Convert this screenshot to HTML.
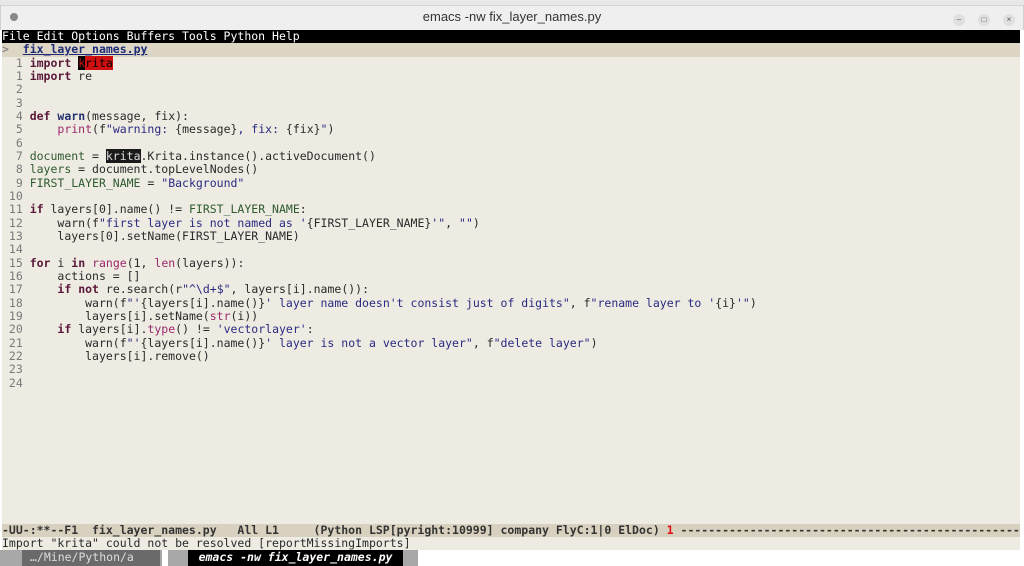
<!DOCTYPE html>
<html><head><meta charset="utf-8"><style>
*{margin:0;padding:0;box-sizing:border-box}
body{width:1024px;height:566px;overflow:hidden;background:#fff;font-family:"DejaVu Sans Mono","Liberation Mono",monospace;position:relative}
.sys{position:absolute;left:0;top:0;width:1024px;height:5px;background:#e8e8e8}
.title{position:absolute;left:0;top:5px;width:1024px;height:25px;background:#efefef;border-top:1px solid #d6d6d6;border-left:1px solid #d0d0d0;border-right:1px solid #d0d0d0;font-family:"Liberation Sans",sans-serif;font-size:13px;color:#333;text-align:center;line-height:22px}
.wb{position:absolute;top:8px;width:12px;height:12px;border-radius:50%;background:#e0e0e0;font-size:8px;line-height:12px;color:#555}
.term{position:absolute;left:2px;top:30px;width:1018px;height:520px;background:#eeebe3;overflow:hidden}
.row{position:absolute;left:0;width:1018px;height:13.33px;font-size:11.5px;line-height:13.33px;white-space:pre;color:#2a2a2a}
.menu{background:#000;color:#fff}
.hdr{background:#ddd6c5}
.ln{color:#7a7a7a}
.k{color:#5a1838;font-weight:bold}
.f{color:#23316e;font-weight:bold}
.b{color:#9a2a6a}
.s{color:#2a2a80}
.v{color:#2e5a2e}
.mode{background:#d9d1bf;font-weight:bold;color:#333}
.task{position:absolute;left:0;top:550px;width:1024px;height:16px;background:#fff}
</style></head><body>
<div class="sys"></div>
<div class="title">emacs -nw fix_layer_names.py
<div class="wb" style="left:9px;top:7px;width:8px;height:8px;background:#888;"></div>
<div class="wb" style="left:952px">–</div><div class="wb" style="left:977px">□</div><div class="wb" style="left:1002px">×</div></div>
<div class="term">
<div class="row menu" style="top:0">File Edit Options Buffers Tools Python Help</div>
<div class="row hdr" style="top:13.33px"><span style="color:#777">&gt;</span>  <span style="color:#1c2a78;font-weight:bold;text-decoration:underline">fix_layer_names.py</span></div>
<div class="row" style="top:26.66px"><span class="ln">  1 </span><span class="k">import</span> <span style="background:#d01010;color:#000"><span style="background:#000;color:#d01010">k</span>rita</span></div>
<div class="row" style="top:40px"><span class="ln">  1 </span><span class="k">import</span> re</div>
<div class="row" style="top:53.33px"><span class="ln">  2 </span></div>
<div class="row" style="top:66.66px"><span class="ln">  3 </span></div>
<div class="row" style="top:80px"><span class="ln">  4 </span><span class="k">def</span> <span class="f">warn</span>(message, fix):</div>
<div class="row" style="top:93.33px"><span class="ln">  5 </span>    <span class="b">print</span>(f<span class="s">"warning: </span>{message}<span class="s">, fix: </span>{fix}<span class="s">"</span>)</div>
<div class="row" style="top:106.66px"><span class="ln">  6 </span></div>
<div class="row" style="top:120px"><span class="ln">  7 </span><span class="v">document</span> = <span style="background:#1a1a1a;color:#ddd">krita</span>.Krita.instance().activeDocument()</div>
<div class="row" style="top:133.33px"><span class="ln">  8 </span><span class="v">layers</span> = document.topLevelNodes()</div>
<div class="row" style="top:146.66px"><span class="ln">  9 </span><span class="v">FIRST_LAYER_NAME</span> = <span class="s">"Background"</span></div>
<div class="row" style="top:160px"><span class="ln"> 10 </span></div>
<div class="row" style="top:173.33px"><span class="ln"> 11 </span><span class="k">if</span> layers[0].name() != <span class="v">FIRST_LAYER_NAME</span>:</div>
<div class="row" style="top:186.66px"><span class="ln"> 12 </span>    warn(f<span class="s">"first layer is not named as '</span>{FIRST_LAYER_NAME}<span class="s">'"</span>, <span class="s">""</span>)</div>
<div class="row" style="top:200px"><span class="ln"> 13 </span>    layers[0].setName(FIRST_LAYER_NAME)</div>
<div class="row" style="top:213.33px"><span class="ln"> 14 </span></div>
<div class="row" style="top:226.66px"><span class="ln"> 15 </span><span class="k">for</span> i <span class="k">in</span> <span class="b">range</span>(1, <span class="b">len</span>(layers)):</div>
<div class="row" style="top:240px"><span class="ln"> 16 </span>    actions = []</div>
<div class="row" style="top:253.33px"><span class="ln"> 17 </span>    <span class="k">if</span> <span class="k">not</span> re.search(r<span class="s">"^\d+$"</span>, layers[i].name()):</div>
<div class="row" style="top:266.66px"><span class="ln"> 18 </span>        warn(f<span class="s">"'</span>{layers[i].name()}<span class="s">' layer name doesn't consist just of digits"</span>, f<span class="s">"rename layer to '</span>{i}<span class="s">'"</span>)</div>
<div class="row" style="top:280px"><span class="ln"> 19 </span>        layers[i].setName(<span class="b">str</span>(i))</div>
<div class="row" style="top:293.33px"><span class="ln"> 20 </span>    <span class="k">if</span> layers[i].<span class="b">type</span>() != <span class="s">'vectorlayer'</span>:</div>
<div class="row" style="top:306.66px"><span class="ln"> 21 </span>        warn(f<span class="s">"'</span>{layers[i].name()}<span class="s">' layer is not a vector layer"</span>, f<span class="s">"delete layer"</span>)</div>
<div class="row" style="top:320px"><span class="ln"> 22 </span>        layers[i].remove()</div>
<div class="row" style="top:333.33px"><span class="ln"> 23 </span></div>
<div class="row" style="top:346.66px"><span class="ln"> 24 </span></div>
<div class="row mode" style="top:493.5px">-UU-:**--F1  fix_layer_names.py   All L1     (Python LSP[pyright:10999] company FlyC:1|0 ElDoc) <span style="color:#e01010">1</span> ---------------------------------------------------</div>
<div class="row" style="top:506.83px;width:1011px">Import "krita" could not be resolved [reportMissingImports]</div>
</div>
<div class="task">
<div style="position:absolute;left:0;top:0;width:162px;height:16px;background:#a8a8a8"></div>
<div style="position:absolute;left:22px;top:0;width:138px;height:16px;background:#6a6a6a;color:#ddd;font-size:11.5px;line-height:15px;padding-left:8px;white-space:pre">…/Mine/Python/a</div>
<div style="position:absolute;left:168px;top:0;width:250px;height:16px;background:#a8a8a8"></div>
<div style="position:absolute;left:188px;top:0;width:215px;height:16px;background:#000;color:#fff;font-size:11.5px;line-height:15px;font-weight:bold;font-style:italic;text-align:center;white-space:pre">emacs -nw fix_layer_names.py</div>
</div>
</body></html>
